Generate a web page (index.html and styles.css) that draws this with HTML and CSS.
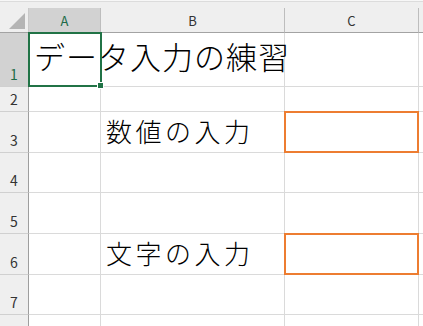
FILE: index.html
```html
<!DOCTYPE html>
<html lang="ja">
<head>
    <meta charset="UTF-8">
    <title>データ入力の練習</title>
    <link rel="stylesheet" href="styles.css">
</head>
<body>
    <div class="topbar"></div>
    <div class="sheet">
        <!-- column headers -->
        <div class="corner"><span class="corner-tri"></span></div>
        <div class="colhead selected">A</div>
        <div class="colhead">B</div>
        <div class="colhead">C</div>
        <div class="colhead last"></div>

        <!-- row 1 -->
        <div class="rowhead selected">1</div>
        <div class="cell active"><span class="title">データ入力の練習</span><div class="selection"><span class="handle"></span></div></div>
        <div class="cell"></div>
        <div class="cell"></div>
        <div class="cell last"></div>

        <!-- row 2 -->
        <div class="rowhead">2</div>
        <div class="cell"></div>
        <div class="cell"></div>
        <div class="cell"></div>
        <div class="cell last"></div>

        <!-- row 3 -->
        <div class="rowhead">3</div>
        <div class="cell"></div>
        <div class="cell"><span class="label">数値の入力</span></div>
        <div class="cell input"></div>
        <div class="cell last"></div>

        <!-- row 4 -->
        <div class="rowhead">4</div>
        <div class="cell"></div>
        <div class="cell"></div>
        <div class="cell"></div>
        <div class="cell last"></div>

        <!-- row 5 -->
        <div class="rowhead">5</div>
        <div class="cell"></div>
        <div class="cell"></div>
        <div class="cell"></div>
        <div class="cell last"></div>

        <!-- row 6 -->
        <div class="rowhead">6</div>
        <div class="cell"></div>
        <div class="cell"><span class="label">文字の入力</span></div>
        <div class="cell input"></div>
        <div class="cell last"></div>

        <!-- row 7 -->
        <div class="rowhead">7</div>
        <div class="cell"></div>
        <div class="cell"></div>
        <div class="cell"></div>
        <div class="cell last"></div>

        <!-- row 8 -->
        <div class="rowhead"></div>
        <div class="cell"></div>
        <div class="cell"></div>
        <div class="cell"></div>
        <div class="cell last"></div>
    </div>
</body>
</html>
```

FILE: styles.css
```css
* {
    box-sizing: border-box;
}

body {
    margin: 0;
    padding: 0;
    width: 423px;
    height: 326px;
    overflow: hidden;
    background-color: #ffffff;
    font-family: "Noto Sans CJK JP", "Noto Sans", sans-serif;
    color: #000;
}

.topbar {
    height: 8px;
    background-color: #efefef;
    border-top: 1px solid #f7f7f7;
    box-shadow: inset 0 1px 0 #dcdcdc;
}

.sheet {
    display: grid;
    grid-template-columns: 29px 72px 184px 134px 1fr;
    grid-template-rows: 25px 54px 25px 41px 40px 41px 41px 40px 20px;
}

.corner {
    position: relative;
    background-color: #efefef;
    border-right: 1px solid #c9c9c9;
    border-bottom: 1px solid #a3a3a3;
}

.corner-tri {
    position: absolute;
    right: 3px;
    bottom: 3px;
    width: 0;
    height: 0;
    border-left: 16px solid transparent;
    border-bottom: 16px solid #b5b5b5;
}

.colhead {
    display: flex;
    align-items: center;
    justify-content: center;
    background-color: #efefef;
    border-right: 1px solid #bdbdbd;
    border-bottom: 1px solid #a3a3a3;
    font-size: 13px;
    color: #333;
    padding-top: 1px;
}

.colhead.selected {
    background-color: #d2d2d2;
    color: #1d6b48;
}

.colhead.last {
    border-right: none;
}

.rowhead {
    display: flex;
    align-items: flex-end;
    justify-content: center;
    padding-bottom: 4px;
    background-color: #efefef;
    border-right: 1px solid #9e9e9e;
    border-bottom: 1px solid #d0d0d0;
    font-size: 14px;
    line-height: 16px;
    color: #333;
}

.rowhead.selected {
    background-color: #d2d2d2;
    color: #1d6b48;
}

.cell {
    display: flex;
    align-items: center;
    padding-left: 4px;
    border-right: 1px solid #dadada;
    border-bottom: 1px solid #dadada;
    white-space: nowrap;
}

.cell.last {
    border-right: none;
}

.cell.active {
    position: relative;
}

.title {
    font-size: 31px;
    font-weight: 300;
    letter-spacing: 1px;
    line-height: 40px;
    margin-top: -8px;
    margin-left: 1px;
}

.label {
    font-size: 26px;
    font-weight: 300;
    letter-spacing: 3.5px;
    line-height: 34px;
    margin-top: -3px;
    margin-left: 1px;
}

.selection {
    position: absolute;
    left: -1px;
    top: -1px;
    width: 74px;
    height: 55px;
    border: 2px solid #217346;
}

.handle {
    position: absolute;
    right: -4px;
    bottom: -4px;
    width: 7px;
    height: 7px;
    background-color: #217346;
    border: 1px solid #ffffff;
}

.cell.input {
    position: relative;
}

.cell.input::after {
    content: "";
    position: absolute;
    left: -1px;
    top: -1px;
    right: -1px;
    bottom: -1px;
    border: 2px solid #ed7d31;
}
```
